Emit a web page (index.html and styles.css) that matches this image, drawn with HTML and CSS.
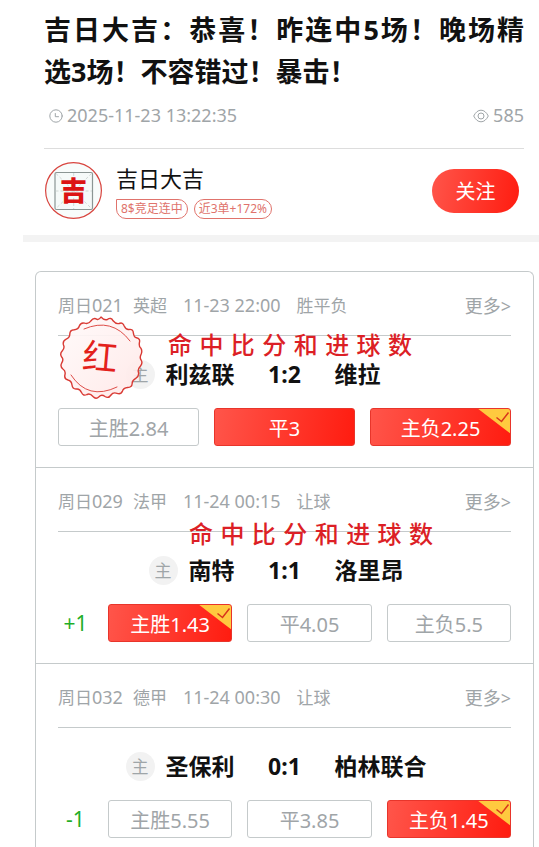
FILE: index.html
```
<!DOCTYPE html>
<html lang="zh-CN">
<head>
    <meta charset="UTF-8">
    <meta name="viewport" content="width=device-width, initial-scale=1.0">
    <title>吉日大吉</title>
    <link rel="stylesheet" href="styles.css">
</head>
<body>
    <!-- Article header -->
    <header class="article-header">
        <h1 class="article-title"><span class="title-line">吉日大吉：恭喜！昨连中5场！晚场精</span>选3场！不容错过！暴击！</h1>
        <div class="article-info">
            <span class="info-item">
                <svg class="icon-clock" viewBox="0 0 14 14" fill="none" stroke="currentColor" stroke-linecap="round">
                    <circle cx="7" cy="7" r="6.2"/>
                    <path d="M6.3 4.500v3.200h3.200"/>
                </svg>
                <time>2025-11-23 13:22:35</time>
            </span>
            <span class="info-item">
                <svg class="icon-eye" viewBox="0 0 16 14" fill="none" stroke="currentColor">
                    <path d="M.7 7C2.700 3.200 5 1.200 8 1.200S13.300 3.200 15.300 7C13.300 10.800 11 12.800 8 12.800S2.700 10.800.7 7z"/>
                    <circle cx="8" cy="7" r="3"/>
                </svg>
                <span>585</span>
            </span>
        </div>
    </header>

    <!-- Author -->
    <section class="author">
        <svg class="avatar" viewBox="0 0 57 57">
            <circle cx="28.500" cy="28.500" r="27.900" fill="#f8fcfb" stroke="#d8453f" stroke-width="1.200"/>
            <rect x="10" y="10.500" width="37.500" height="37" rx="1.500" fill="#f5faf9" stroke="#8b9694" stroke-width="1.200"/>
            <path d="M11 11.500l35.500 35M46.500 11.500l-35.500 35M28.700 11v36M10.500 29h36.500" fill="none" stroke="#c6cfcd" stroke-width=".8" stroke-dasharray="3 2"/>
            <text class="avatar-text" x="28.500" y="38.500" text-anchor="middle">吉</text>
        </svg>
        <div class="author-info">
            <div class="author-name">吉日大吉</div>
            <div class="tags">
                <span class="tag tag-corner">8$竞足连中</span>
                <span class="tag">近3单+172%</span>
            </div>
        </div>
        <button class="follow-btn" type="button">关注</button>
    </section>

    <div class="divider"></div>

    <!-- Matches -->
    <main class="match-list">
        <section class="match">
            <div class="match-meta">
                <span class="match-no">周日<span class="num">021</span></span>
                <span class="league">英超</span>
                <time class="num">11-23 22:00</time>
                <span>胜平负</span>
                <a href="#" class="more">更多&gt;</a>
            </div>
            <div class="teams">
                <div class="home"><span class="home-badge">主</span>利兹联</div>
                <div class="score">1:2</div>
                <div class="away">维拉</div>
            </div>
            <div class="odds">
                <button class="odd" type="button">主胜2.84</button>
                <button class="odd picked" type="button">平3</button>
                <button class="odd picked" type="button">主负2.25<svg class="hit" viewBox="0 0 34 26"><path d="M0 0h34v26z" fill="#ffc93f"/><path d="M19.500 9.500l5 4 7-9" fill="none" stroke="#d9351c" stroke-width="1.500"/></svg></button>
            </div>
            <svg class="stamp" viewBox="0 0 84 84">
                <defs>
                    <linearGradient id="stampFill" x1="0" y1="0" x2="1" y2="1">
                        <stop offset="0" stop-color="#fffafa"/>
                        <stop offset="1" stop-color="#ffe8e7"/>
                    </linearGradient>
                </defs>
                <path fill="url(#stampFill)" fill-opacity=".92" stroke="#d93a34" stroke-width="1.400" stroke-linejoin="round" d="M42 1Q45.200 4.600 48.400 3.500 52 .8 54.100 4.800 57 8.300 60 7.500 63.900 5.800 65.200 10 67.100 13.900 69.900 13.500 74.200 12.700 74.400 17.100 75 21.500 77.500 21.700 81.500 22.600 80.400 26.700 79.800 31 81.700 32 83.600 34.500 82.200 38 80.300 42 82.100 44 84 47 81.500 50 78.300 53.400 79.500 56.500 80.300 60 76.700 62.300 72.900 64.500 73.200 67.500 72.900 71.500 68.600 71.500 64.300 71.900 63.500 75 61.900 78.800 58 77.300 54 76 52 79 49.500 82.800 46 80.500 42.500 78 40 80.800 37 83.800 34 80.500 31 77 28 78.500 24.300 80.500 22.500 76.500 20.700 72.500 17.500 73 13.500 73.300 13 69 12.500 64.700 9 64 5 63 5.900 59 7 55 3.900 53 .8 50.500 2.700 47 5 43.500 2.700 41 .5 37.800 3.200 35 6 32 4.500 29 3.300 25 7.200 23.200 11 21.500 10.800 18 10.900 13.900 15.200 13.700 19.400 13.400 20.300 10 21.800 6 25.800 7.200 29.800 8.300 31.800 5 34.500 1.300 38 3.300 40.200 4 42 1z"/>
                <path fill="none" stroke="#d93a34" stroke-width=".9" stroke-linecap="round" d="M25 13Q53 1 71 25M12 59Q29 85 58 71"/>
                <text class="stamp-text" x="41" y="54" text-anchor="middle" transform="rotate(5 42 42)">红</text>
            </svg>
            <div class="note note-first">命中比分和进球数</div>
        </section>

        <section class="match">
            <div class="match-meta">
                <span class="match-no">周日<span class="num">029</span></span>
                <span class="league">法甲</span>
                <time class="num">11-24 00:15</time>
                <span>让球</span>
                <a href="#" class="more">更多&gt;</a>
            </div>
            <div class="teams">
                <div class="home"><span class="home-badge">主</span>南特</div>
                <div class="score">1:1</div>
                <div class="away">洛里昂</div>
            </div>
            <div class="odds">
                <span class="handicap">+1</span>
                <button class="odd picked" type="button">主胜1.43<svg class="hit" viewBox="0 0 34 26"><path d="M0 0h34v26z" fill="#ffc93f"/><path d="M19.500 9.500l5 4 7-9" fill="none" stroke="#d9351c" stroke-width="1.500"/></svg></button>
                <button class="odd" type="button">平4.05</button>
                <button class="odd" type="button">主负5.5</button>
            </div>
            <div class="note note-second">命中比分和进球数</div>
        </section>

        <section class="match">
            <div class="match-meta">
                <span class="match-no">周日<span class="num">032</span></span>
                <span class="league">德甲</span>
                <time class="num">11-24 00:30</time>
                <span>让球</span>
                <a href="#" class="more">更多&gt;</a>
            </div>
            <div class="teams">
                <div class="home"><span class="home-badge">主</span>圣保利</div>
                <div class="score">0:1</div>
                <div class="away">柏林联合</div>
            </div>
            <div class="odds">
                <span class="handicap">-1</span>
                <button class="odd" type="button">主胜5.55</button>
                <button class="odd" type="button">平3.85</button>
                <button class="odd picked" type="button">主负1.45<svg class="hit" viewBox="0 0 34 26"><path d="M0 0h34v26z" fill="#ffc93f"/><path d="M19.500 9.500l5 4 7-9" fill="none" stroke="#d9351c" stroke-width="1.500"/></svg></button>
            </div>
        </section>
    </main>
</body>
</html>
```
FILE: styles.css
```
* {
    margin: 0;
    padding: 0;
    box-sizing: border-box;
}

body {
    background-color: #fff;
    color: #111;
    font-family: "Noto Sans", "Noto Sans CJK SC", sans-serif;
}

button {
    font-family: inherit;
    cursor: pointer;
}

/* Article header */
.article-header {
    margin: 0 15px 0 44px;
    padding-top: 9px;
    border-bottom: 1px solid #ddd;
}

.article-title {
    font-size: 27px;
    line-height: 42px;
    font-weight: 700;
}

.title-line {
    display: block;
    text-align-last: justify;
}

.article-info {
    display: flex;
    justify-content: space-between;
    padding: 10px 0 20px 5px;
    font-size: 18px;
    line-height: 25px;
    color: #9fa5a8;
}

.info-item {
    display: flex;
    align-items: center;
    gap: 4px;
}

.icon-clock {
    width: 14px;
    height: 14px;
}

.icon-eye {
    width: 16px;
    height: 14px;
}

/* Author */
.author {
    display: flex;
    align-items: center;
    margin: 0 20px 0 45px;
    padding: 13px 0 16px;
}

.avatar {
    width: 57px;
    height: 57px;
    margin-right: 14px;
}

.avatar-text {
    font-size: 27px;
    font-weight: 900;
    fill: #dc1414;
}

.author-info {
    flex: 1;
}

.author-name {
    font-size: 22px;
    line-height: 30px;
}

.tags {
    display: flex;
    gap: 6px;
    margin-top: 6px;
}

.tag {
    padding: 0 4px;
    border: 1px solid #e0736c;
    border-radius: 10px;
    font-size: 12px;
    line-height: 18px;
    color: #e0736c;
}

.tag-corner {
    border-top-left-radius: 0;
}

.follow-btn {
    width: 87px;
    height: 44px;
    border: none;
    border-radius: 22px;
    background: linear-gradient(100deg, #ff554a, #ff1c10);
    color: #fff;
    font-size: 20px;
}

.divider {
    height: 7px;
    margin-left: 23px;
    background-color: #f3f3f3;
}

/* Match list */
.match-list {
    margin: 29px 5px 0 35px;
    border: 1px solid #c5cacb;
    border-bottom: none;
    border-radius: 6px 6px 0 0;
}

.match {
    position: relative;
    padding: 0 22px 21px;
    border-bottom: 1px solid #c5cacb;
}

.match:last-child {
    padding-bottom: 9px;
    border-bottom: none;
}

.match-meta {
    display: flex;
    align-items: center;
    gap: 16px;
    height: 64px;
    padding-top: 2px;
    border-bottom: 1px solid #c5cacb;
    font-size: 17px;
    color: #9fa5a8;
}

.match-no {
    margin-right: -6px;
}

.num {
    font-size: 18px;
}

.more {
    margin-left: auto;
    font-size: 18px;
    color: inherit;
    text-decoration: none;
}

.teams {
    display: grid;
    grid-template-columns: 1fr 100px 1fr;
    align-items: center;
    height: 72px;
    padding-top: 4px;
    font-size: 23px;
    line-height: 26px;
    font-weight: 700;
}

.home {
    display: flex;
    align-items: center;
    justify-content: flex-end;
    gap: 11px;
}

.home-badge {
    width: 29px;
    height: 29px;
    border-radius: 50%;
    background-color: #f2f2f2;
    font-size: 17px;
    line-height: 29px;
    font-weight: 400;
    text-align: center;
    color: #9fa5a8;
}

.score {
    text-align: center;
}

/* Odds */
.odds {
    display: flex;
    align-items: center;
    gap: 15px;
}

.handicap {
    width: 35px;
    font-size: 21px;
    line-height: 30px;
    text-align: center;
    color: #1fae28;
}

.odd {
    position: relative;
    flex: 1;
    height: 38px;
    border: 1px solid #c5cacb;
    border-radius: 3px;
    background-color: #fff;
    color: #9fa5a8;
    font-size: 20px;
    overflow: hidden;
}

.odd.picked {
    border-color: #e8352b;
    background: linear-gradient(100deg, #ff554a, #ff1c10);
    color: #fff;
}

.hit {
    position: absolute;
    top: -1px;
    right: -1px;
    width: 34px;
    height: 26px;
}

/* Red stamp and notes lie over the match */
.stamp {
    position: absolute;
    top: 44px;
    left: 23px;
    width: 84px;
    height: 84px;
}

.stamp-text {
    font-size: 35px;
    font-weight: 400;
    fill: #e3211b;
}

.note {
    position: absolute;
    width: 244px;
    font-family: KaiTi, STKaiti, "Noto Sans CJK SC", sans-serif;
    font-size: 24px;
    line-height: 24px;
    font-weight: 500;
    text-align-last: justify;
    color: #dc1f26;
}

.note-first {
    top: 60px;
    left: 132px;
}

.note-second {
    top: 53px;
    left: 153px;
}
```
